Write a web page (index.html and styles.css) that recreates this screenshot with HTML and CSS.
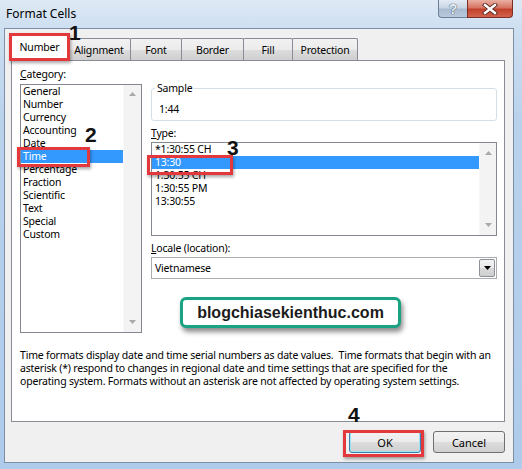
FILE: index.html
```html
<!DOCTYPE html>
<html>
<head>
<meta charset="utf-8">
<link rel="stylesheet" href="styles.css">
</head>
<body>
<div class="window">
  <div class="titlebar">
    <span class="title">Format Cells</span>
    <div class="caption">
      <div class="cbtn help">?</div>
      <div class="cbtn close">
        <svg width="16" height="12" viewBox="0 0 16 12"><path d="M3 2L13 10M13 2L3 10" stroke="#5a2a22" stroke-width="4.2" stroke-linecap="square"/><path d="M3 2L13 10M13 2L3 10" stroke="#fff" stroke-width="2.4" stroke-linecap="square"/></svg>
      </div>
    </div>
  </div>
  <div class="client">
    <div class="tabs">
      <div class="tab active t-num">Number</div>
      <div class="tab t-align">Alignment</div>
      <div class="tab t-font">Font</div>
      <div class="tab t-border">Border</div>
      <div class="tab t-fill">Fill</div>
      <div class="tab t-prot">Protection</div>
    </div>
    <div class="panel">
      <div class="cols">
        <div class="col-left">
          <div class="label"><u>C</u>ategory:</div>
          <div class="listbox cat">
            <div class="items">
              <div class="item">General</div>
              <div class="item">Number</div>
              <div class="item">Currency</div>
              <div class="item">Accounting</div>
              <div class="item">Date</div>
              <div class="item sel">Time</div>
              <div class="item">Percentage</div>
              <div class="item">Fraction</div>
              <div class="item">Scientific</div>
              <div class="item">Text</div>
              <div class="item">Special</div>
              <div class="item">Custom</div>
            </div>
            <div class="vscroll">
              <svg width="7" height="4" viewBox="0 0 7 4"><path d="M0 4L3.5 0L7 4Z" fill="#a9a9a9"/></svg>
              <svg width="7" height="4" viewBox="0 0 7 4"><path d="M0 0L3.5 4L7 0Z" fill="#a9a9a9"/></svg>
            </div>
          </div>
        </div>
        <div class="col-right">
          <div class="group">
            <div class="group-label">Sample</div>
            <div class="group-value">1:44</div>
          </div>
          <div class="label type-label"><u>T</u>ype:</div>
          <div class="listbox type">
            <div class="items">
              <div class="item">*1:30:55 CH</div>
              <div class="item sel">13:30</div>
              <div class="item">1:30:55 CH</div>
              <div class="item">1:30:55 PM</div>
              <div class="item">13:30:55</div>
            </div>
            <div class="vscroll">
              <svg width="7" height="4" viewBox="0 0 7 4"><path d="M0 4L3.5 0L7 4Z" fill="#a9a9a9"/></svg>
              <svg width="7" height="4" viewBox="0 0 7 4"><path d="M0 0L3.5 4L7 0Z" fill="#a9a9a9"/></svg>
            </div>
          </div>
          <div class="label locale-label"><u>L</u>ocale (location):</div>
          <div class="combo">
            <span class="combo-text">Vietnamese</span>
            <div class="combo-btn">
              <svg width="7" height="4" viewBox="0 0 7 4"><path d="M0 0L3.5 4L7 0Z" fill="#000"/></svg>
            </div>
          </div>
        </div>
      </div>
      <p class="desc">Time formats display date and time serial numbers as date values.&nbsp; Time formats that begin with an<br>asterisk (*) respond to changes in regional date and time settings that are specified for the<br>operating system. Formats without an asterisk are not affected by operating system settings.</p>
    </div>
    <div class="buttons">
      <div class="btn default">OK</div>
      <div class="btn">Cancel</div>
    </div>
  </div>

  <div class="mark box1"></div>
  <div class="mark box2"></div>
  <div class="mark box3"></div>
  <div class="mark box4"></div>
  <div class="num n1">1</div>
  <div class="num n2">2</div>
  <div class="num n3">3</div>
  <div class="num n4">4</div>
  <div class="watermark">blogchiasekienthuc.com</div>
</div>
</body>
</html>
```

FILE: styles.css
```css
* { box-sizing: border-box; }
body {
  margin: 0;
  font-family: "Noto Sans", "Open Sans", sans-serif;
  font-size: 10.5px;
  letter-spacing: -0.2px;
  color: #000;
}
.window {
  position: relative;
  width: 522px;
  height: 469px;
  overflow: hidden;
  background: linear-gradient(180deg, #dfe9f5 0px, #cddff1 28px, #b9d2ec 120px, #aecbeb 469px);
}
.titlebar {
  height: 28px;
  display: flex;
  justify-content: space-between;
  align-items: flex-start;
}
.title {
  padding: 6px 0 0 6px;
  font-size: 12px;
  line-height: 16px;
  letter-spacing: 0;
}
.caption {
  display: flex;
  margin-right: 9px;
}
.cbtn {
  height: 18px;
  display: flex;
  align-items: center;
  justify-content: center;
  border: 1px solid #6d7f95;
  border-top: none;
}
.help {
  width: 29px;
  border-radius: 0 0 0 4px;
  border-right: none;
  background: linear-gradient(180deg, #e3ebf4 0%, #c9d6e5 45%, #a9bbd0 55%, #b9cadd 100%);
  color: #e8eef5;
  font-family: "Liberation Sans", sans-serif;
  font-weight: bold;
  font-size: 14px;
  text-shadow: 0 0 1px #3a4a5c, 0 0 1px #3a4a5c;
}
.close {
  width: 46px;
  border-radius: 0 0 4px 0;
  border-color: #7d2f25;
  background: linear-gradient(180deg, #eab0a3 0%, #d67462 45%, #c2402b 55%, #d2634c 100%);
}
.client {
  margin-left: 4px;
  width: 510px;
  height: 435px;
  border: 1px solid #7d8fa5;
  background: #f0f0f0;
  padding: 4px 8px 0 6px;
}
.tabs {
  display: flex;
  align-items: flex-end;
  height: 27px;
  position: relative;
  z-index: 1;
}
.tab {
  height: 22px;
  border: 1px solid #898c95;
  border-bottom: none;
  border-radius: 2px 2px 0 0;
  background: linear-gradient(180deg, #f2f2f2 0%, #ebebeb 50%, #dddddd 51%, #cfcfcf 100%);
  margin-left: -1px;
  display: flex;
  align-items: center;
  justify-content: center;
  line-height: 13px;
  padding-top: 1px;
}
.tab.active {
  height: 28px;
  margin-left: 0;
  margin-bottom: -1px;
  background: #fff;
  padding-top: 0;
  position: relative;
  z-index: 2;
}
.t-num { width: 57px; }
.t-align { width: 64px; margin-left: -1px; }
.t-font { width: 52px; }
.t-border { width: 63px; }
.t-fill { width: 50px; }
.t-prot { width: 66px; }

.panel {
  width: 494px;
  height: 362px;
  border: 1px solid #898c95;
  background: #fff;
  padding: 6px 0 0 8px;
}
.cols {
  display: flex;
}
.label {
  line-height: 14px;
  margin-bottom: 3px;
}
.listbox {
  border: 1px solid #828790;
  background: #fff;
  display: flex;
}
.listbox .items {
  flex: 1;
}
.item {
  height: 13px;
  line-height: 13px;
  padding-left: 2px;
  white-space: nowrap;
}
.item.sel {
  background: #3399ff;
  color: #fff;
}
.vscroll {
  width: 18px;
  background: #f3f3f3;
  border-left: 1px solid #f9f9f9;
  display: flex;
  flex-direction: column;
  justify-content: space-between;
  align-items: center;
  padding: 7px 0 8px;
}
.cat {
  width: 122px;
  height: 249px;
}
.col-right {
  margin-left: 9px;
  width: 346px;
  padding-top: 21px;
}
.group {
  height: 33px;
  border: 1px solid #d5dfe5;
  border-radius: 3px;
}
.group-label {
  width: fit-content;
  margin: -7px 0 0 3px;
  padding: 0 2px;
  background: #fff;
  line-height: 13px;
}
.group-value {
  margin: 8px 0 0 7px;
  line-height: 13px;
}
.type-label {
  margin-top: 5px;
  line-height: 14px;
  margin-bottom: 2px;
}
.type {
  height: 94px;
}
.type .item { padding-left: 3px; }
.type .vscroll {
  width: 17px;
  padding: 8px 0 8px;
}
.locale-label {
  margin-top: 5px;
  margin-bottom: 2px;
}
.combo {
  height: 22px;
  border: 1px solid #abadb3;
  display: flex;
  align-items: center;
  justify-content: space-between;
  padding: 0 1px 0 3px;
}
.combo-btn {
  width: 16px;
  height: 18px;
  border: 1px solid #8a8f98;
  border-radius: 2px;
  background: linear-gradient(180deg, #f4f4f4 0%, #e9e9e9 50%, #dadada 51%, #cfcfcf 100%);
  display: flex;
  align-items: center;
  justify-content: center;
}
.desc {
  margin: 16px 0 0 0;
  line-height: 13px;
  white-space: nowrap;
}
.buttons {
  display: flex;
  justify-content: flex-end;
  gap: 12px;
  margin-top: 9px;
}
.btn {
  width: 72px;
  height: 22px;
  border: 1px solid #707070;
  border-radius: 3px;
  background: linear-gradient(180deg, #f2f2f2 0%, #ebebeb 50%, #dddddd 51%, #cfcfcf 100%);
  display: flex;
  align-items: center;
  justify-content: center;
  font-size: 11px;
  letter-spacing: 0;
}
.btn.default {
  border-color: #3c7fb1;
  box-shadow: inset 0 0 0 1px #9fe3f5;
}

.mark {
  position: absolute;
  border: 3px solid #e3383c;
  box-shadow: 1px 2px 3px rgba(0,0,0,0.35);
  z-index: 5;
}
.box1 { left: 9px; top: 33px; width: 61px; height: 28px; }
.box2 { left: 17px; top: 147px; width: 73px; height: 20px; }
.box3 { left: 147px; top: 155px; width: 86px; height: 20px; }
.box4 { left: 343px; top: 430px; width: 81px; height: 27px; }

.num {
  position: absolute;
  font-family: "Liberation Sans", Arial, sans-serif;
  font-weight: bold;
  font-size: 21px;
  line-height: 1;
  letter-spacing: 0;
  color: #111;
  z-index: 6;
}
.n1 { left: 69px; top: 22px; }
.n2 { left: 85px; top: 124px; }
.n3 { left: 227px; top: 137px; }
.n4 { left: 348px; top: 404px; }

.watermark {
  position: absolute;
  left: 180px;
  top: 297px;
  width: 221px;
  height: 31px;
  border: 3px solid #1aa383;
  border-radius: 6px;
  background: #fff;
  box-shadow: 2px 4px 5px rgba(0,0,0,0.45);
  font-family: "Liberation Sans", Arial, sans-serif;
  font-weight: bold;
  font-size: 16px;
  letter-spacing: 0;
  color: #1b1b1b;
  display: flex;
  align-items: center;
  justify-content: center;
  z-index: 5;
}
```
